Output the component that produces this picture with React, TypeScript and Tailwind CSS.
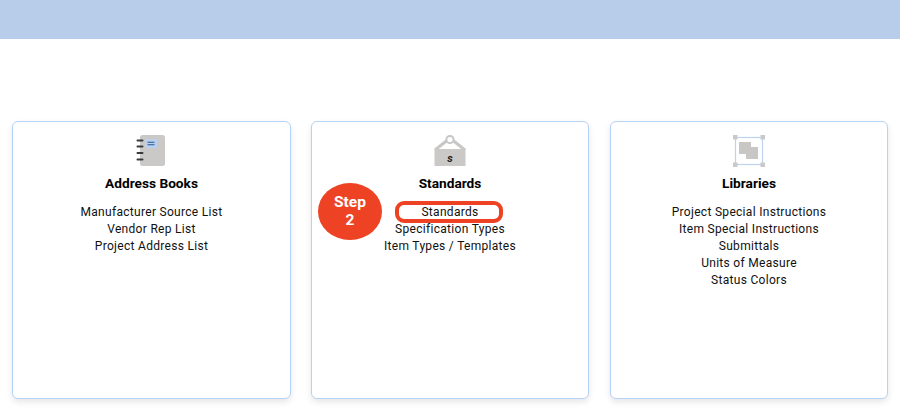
function NotebookIcon() {
  return (
    <svg width="32" height="32" viewBox="0 0 32 32" className="block">
      <rect x="4" y="0" width="25" height="31" rx="2.5" fill="#cbc8c8" />
      <rect x="9" y="4" width="12" height="9" fill="#b9d0ee" />
      <path d="M11.5 7.3h7M11.5 9.8h7" stroke="#2a5590" strokeWidth="1.1" />
      <path d="M1.5 5.5h5M1.5 11.5h5M1.5 18h5M1.5 24.5h5" stroke="#3a3a3a" strokeWidth="2" strokeLinecap="round" />
    </svg>
  )
}

function WeightIcon() {
  return (
    <svg width="32" height="32" viewBox="0 0 32 32" className="block">
      <path d="M1 15 L13 5.5 M31 15 L19 5.5" stroke="#c9c6c6" strokeWidth="3" fill="none" />
      <circle cx="16" cy="4.5" r="3.6" fill="#fff" stroke="#c9c6c6" strokeWidth="2" />
      <rect x="0.5" y="14" width="31" height="17" fill="#cbc8c8" />
      <text x="16" y="27" textAnchor="middle" fontSize="11" fontWeight="700" fontStyle="italic" fontFamily="Roboto, sans-serif" fill="#222">
        s
      </text>
    </svg>
  )
}

function LibraryIcon() {
  return (
    <svg width="32" height="32" viewBox="0 0 32 32" className="block">
      <rect x="2.5" y="2.5" width="27" height="27" fill="none" stroke="#bcd3f0" strokeWidth="1.2" />
      <rect x="0" y="0" width="4.5" height="4.5" fill="#cbc8c8" />
      <rect x="27.5" y="0" width="4.5" height="4.5" fill="#cbc8c8" />
      <rect x="0" y="27.5" width="4.5" height="4.5" fill="#cbc8c8" />
      <rect x="27.5" y="27.5" width="4.5" height="4.5" fill="#cbc8c8" />
      <rect x="6" y="7" width="12" height="12" fill="#c9c6c6" />
      <rect x="13" y="12" width="12" height="12" fill="#c9c6c6" />
    </svg>
  )
}

function Card({ icon, title, className, children }: { icon: React.ReactNode; title: string; className: string; children: React.ReactNode }) {
  return (
    <div className={`relative h-[278px] rounded-md border border-[#b5d2f8] bg-white pt-[13px] shadow-[0_3px_6px_rgba(0,0,0,0.1)] ${className}`}>
      <div className="flex flex-col items-center">
        {icon}
        <h2 className="mt-[6px] text-[13.7px] leading-[20px] font-bold text-black">{title}</h2>
        <div className="mt-[11px] flex flex-col items-center text-[12px] leading-[17px] tracking-[0.3px] text-[#111]">
          {children}
        </div>
      </div>
    </div>
  )
}

export default function App() {
  return (
    <div className="h-[413px] w-[900px] overflow-hidden bg-white font-['Roboto',sans-serif]">
      <div className="h-[39px] bg-[#b8cde9]" />
      <div className="mt-[82px] flex gap-5 px-3">
        <Card className="w-[279px]" icon={<NotebookIcon />} title="Address Books">
          <span>Manufacturer Source List</span>
          <span>Vendor Rep List</span>
          <span>Project Address List</span>
        </Card>
        <Card className="w-[278px]" icon={<WeightIcon />} title="Standards">
          <span className="relative">
            Standards
            <span className="absolute top-[-3px] left-[-26px] h-[22px] w-[108px] rounded-[9px] border-[4px] border-[#ee4224]" />
          </span>
          <span>Specification Types</span>
          <span>Item Types / Templates</span>
          <div className="absolute top-[61px] left-[6px] flex h-[57px] w-[64px] flex-col items-center justify-center rounded-[50%] bg-[#ee4224] pb-[2px] text-[15.5px] leading-[18px] font-bold tracking-normal text-white">
            <span>Step</span>
            <span>2</span>
          </div>
        </Card>
        <Card className="ml-px w-[278px]" icon={<LibraryIcon />} title="Libraries">
          <span>Project Special Instructions</span>
          <span>Item Special Instructions</span>
          <span>Submittals</span>
          <span>Units of Measure</span>
          <span>Status Colors</span>
        </Card>
      </div>
    </div>
  )
}
